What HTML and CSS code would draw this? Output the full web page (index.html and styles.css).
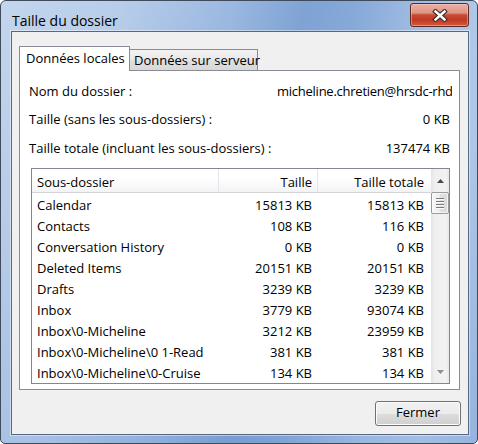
FILE: index.html
```html
<!DOCTYPE html>
<html lang="fr">
<head>
<meta charset="utf-8">
<title>Taille du dossier</title>
<link rel="stylesheet" href="styles.css">
</head>
<body>
<div class="window">
  <div class="titlebar">
    <span class="title">Taille du dossier</span>
    <button class="close" aria-label="Fermer la fenêtre">
      <svg width="16" height="13" viewBox="0 0 16 13" aria-hidden="true">
        <path d="M3.5 2.5 L12.5 10.5 M12.5 2.5 L3.5 10.5" stroke="#3a2a28" stroke-width="4.6" stroke-linecap="square" fill="none"/>
        <path d="M3.5 2.5 L12.5 10.5 M12.5 2.5 L3.5 10.5" stroke="#ffffff" stroke-width="2.4" stroke-linecap="square" fill="none"/>
      </svg>
    </button>
  </div>
  <div class="client">
    <div class="tabs">
      <div class="tab active">Données locales</div>
      <div class="tab inactive">Données sur serveur</div>
    </div>
    <div class="panel">
      <div class="info">
        <div class="info-row"><span>Nom du dossier :</span><span class="email">micheline.chretien@hrsdc-rhdcc.net</span></div>
        <div class="info-row"><span>Taille (sans les sous-dossiers) :</span><span>0 KB</span></div>
        <div class="info-row third"><span>Taille totale (incluant les sous-dossiers) :</span><span>137474 KB</span></div>
      </div>
      <div class="list">
        <div class="lv">
          <div class="lv-head">
            <div class="c c1">Sous-dossier</div>
            <div class="c c2">Taille</div>
            <div class="c c3">Taille totale</div>
          </div>
          <div class="lv-row"><div class="c c1">Calendar</div><div class="c c2">15813 KB</div><div class="c c3">15813 KB</div></div>
          <div class="lv-row"><div class="c c1">Contacts</div><div class="c c2">108 KB</div><div class="c c3">116 KB</div></div>
          <div class="lv-row"><div class="c c1">Conversation History</div><div class="c c2">0 KB</div><div class="c c3">0 KB</div></div>
          <div class="lv-row"><div class="c c1">Deleted Items</div><div class="c c2">20151 KB</div><div class="c c3">20151 KB</div></div>
          <div class="lv-row"><div class="c c1">Drafts</div><div class="c c2">3239 KB</div><div class="c c3">3239 KB</div></div>
          <div class="lv-row"><div class="c c1">Inbox</div><div class="c c2">3779 KB</div><div class="c c3">93074 KB</div></div>
          <div class="lv-row"><div class="c c1">Inbox\0-Micheline</div><div class="c c2">3212 KB</div><div class="c c3">23959 KB</div></div>
          <div class="lv-row"><div class="c c1">Inbox\0-Micheline\0 1-Read</div><div class="c c2">381 KB</div><div class="c c3">381 KB</div></div>
          <div class="lv-row"><div class="c c1">Inbox\0-Micheline\0-Cruise</div><div class="c c2">134 KB</div><div class="c c3">134 KB</div></div>
        </div>
        <div class="vscroll">
          <div class="sb-btn up">
            <svg width="7" height="4" viewBox="0 0 7 4" aria-hidden="true"><polygon points="0,4 3.5,0 7,4" fill="#4a4a4a"/></svg>
          </div>
          <div class="thumb"><div class="grip"></div></div>
          <div class="track"></div>
          <div class="sb-btn down">
            <svg width="7" height="4" viewBox="0 0 7 4" aria-hidden="true"><polygon points="0,0 7,0 3.5,4" fill="#8e8e8e"/></svg>
          </div>
        </div>
      </div>
    </div>
    <div class="footer">
      <button class="btn">Fermer</button>
    </div>
  </div>
</div>
</body>
</html>
```

FILE: styles.css
```css
* {
  box-sizing: border-box;
}

html,
body {
  margin: 0;
  padding: 0;
}

body {
  width: 478px;
  height: 444px;
  overflow: hidden;
  background: #ffffff;
  font-family: "Open Sans", "Noto Sans", sans-serif;
  font-size: 13px;
  color: #000000;
}

.window {
  width: 478px;
  height: 444px;
  border: 1px solid #3f4a5a;
  border-radius: 6px 6px 5px 5px;
  padding: 0 8px 8px 10px;
  display: flex;
  flex-direction: column;
  background:
    linear-gradient(to bottom, rgba(255, 255, 255, 0) 0%, rgba(90, 130, 195, 0.18) 100%),
    linear-gradient(100deg, #c3d6ed 0%, #b7cdea 22%, #9ab8e0 42%, #7fa3d4 55%, #86a9d8 64%, #a9c3e6 80%, #b3cbe9 90%, #a2bee4 100%);
}

.titlebar {
  height: 30px;
  flex: none;
  display: flex;
  align-items: flex-start;
  justify-content: space-between;
}

.title {
  font-size: 14px;
  line-height: 20px;
  margin-top: 10px;
  padding-left: 1px;
  color: #000000;
}

.close {
  width: 59px;
  height: 24px;
  margin-top: 2px;
  padding: 0;
  border: 1px solid #5e2a22;
  border-radius: 3px;
  background: linear-gradient(to bottom, #eab0a4 0%, #e09584 40%, #c94a34 50%, #bd3a24 72%, #d65a3c 100%);
  box-shadow: inset 0 0 0 1px rgba(255, 210, 200, 0.45);
  display: flex;
  align-items: center;
  justify-content: center;
}

.close svg {
  display: block;
}

.client {
  flex: 1;
  border: 1px solid #566880;
  box-shadow: 0 0 0 1px rgba(255, 255, 255, 0.45);
  background: #f0f0f0;
  padding: 14px 8px 8px 7px;
  display: flex;
  flex-direction: column;
}

.tabs {
  height: 24px;
  flex: none;
  display: flex;
  align-items: flex-end;
  position: relative;
  z-index: 1;
}

.tab {
  border: 1px solid #898c95;
  border-bottom: 0;
  white-space: nowrap;
}

.tab.active {
  width: 111px;
  height: 25px;
  margin-bottom: -1px;
  padding: 1px 0 0 6px;
  line-height: 20px;
  background: #ffffff;
  position: relative;
  z-index: 2;
}

.tab.inactive {
  width: 129px;
  height: 21px;
  margin-left: -1px;
  padding: 1px 0 0 4px;
  line-height: 19px;
  background: linear-gradient(to bottom, #f3f3f3 0%, #e9e9e9 45%, #dedede 55%, #d8d8d8 100%);
}

.panel {
  height: 320px;
  flex: none;
  background: #ffffff;
  border: 1px solid #898c95;
  padding: 10px 9px 0 9px;
}

.info {
  display: flex;
  flex-direction: column;
  gap: 8px;
}

.info-row {
  height: 20px;
  line-height: 20px;
  display: flex;
  justify-content: space-between;
  white-space: nowrap;
}

.info-row.third {
  margin-top: 1px;
}

.email {
  width: 175px;
  overflow: hidden;
  margin-right: -2px;
  letter-spacing: -0.25px;
}

.list {
  margin: 10px 0 0 2px;
  height: 216px;
  border: 1px solid #828790;
  display: flex;
}

.lv {
  flex: 1;
  overflow: hidden;
}

.lv-head {
  height: 24px;
  display: flex;
  border-bottom: 1px solid #d5d5d5;
  background: linear-gradient(to bottom, #ffffff 0%, #ffffff 40%, #f2f3f5 100%);
}

.c {
  white-space: nowrap;
  overflow: hidden;
}

.lv-head .c {
  padding-top: 3px;
  line-height: 20px;
  border-right: 1px solid #e4e5e8;
}

.c1 {
  width: 187px;
  padding-left: 5px;
}

.c2 {
  width: 99px;
  padding-right: 6px;
  text-align: right;
}

.c3 {
  width: 113px;
  padding-right: 7px;
  text-align: right;
}

.lv-head .c2 {
  padding-right: 5px;
}

.lv-head .c3 {
  border-right: 0;
}

.lv-row {
  height: 21px;
  padding-top: 3px;
  line-height: 18px;
  display: flex;
}

.vscroll {
  width: 18px;
  flex: none;
  display: flex;
  flex-direction: column;
  background: linear-gradient(to right, #e4e4e4 0%, #efefef 20%, #f2f2f2 80%, #e8e8e8 100%);
}

.sb-btn {
  flex: none;
  display: flex;
  align-items: center;
  justify-content: center;
}

.sb-btn svg {
  display: block;
}

.sb-btn.up {
  height: 23px;
}

.sb-btn.down {
  height: 22px;
}

.thumb {
  height: 22px;
  flex: none;
  border: 1px solid #9a9a9a;
  border-radius: 2px;
  background: linear-gradient(to right, #f7f7f7 0%, #ececec 50%, #e0e0e0 51%, #dadada 100%);
  box-shadow: inset 0 0 0 1px rgba(255, 255, 255, 0.7);
  display: flex;
  align-items: center;
  justify-content: center;
}

.grip {
  width: 8px;
  height: 11px;
  background: repeating-linear-gradient(to bottom, #7b7b7b 0, #7b7b7b 1px, #fbfbfb 1px, #fbfbfb 2px, transparent 2px, transparent 3px);
}

.track {
  flex: 1;
}

.footer {
  flex: none;
  margin-top: 11px;
  display: flex;
  justify-content: flex-end;
}

.btn {
  width: 86px;
  height: 25px;
  margin-right: -1px;
  padding: 0 0 2px 0;
  font-family: inherit;
  font-size: 13px;
  line-height: 21px;
  color: #000000;
  border: 1px solid #707070;
  border-radius: 3px;
  background: linear-gradient(to bottom, #f2f2f2 0%, #ebebeb 50%, #dddddd 51%, #cfcfcf 100%);
  box-shadow: inset 0 0 0 1px #fcfcfc;
}
```
